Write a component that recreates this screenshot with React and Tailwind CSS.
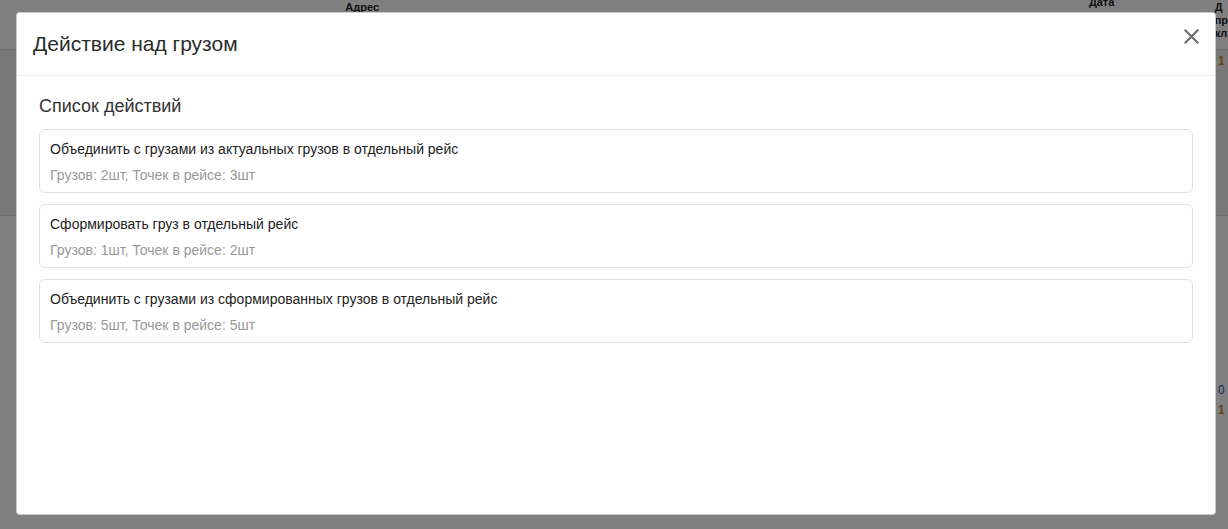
import React from "react";

const actions = [
  {
    title: "Объединить с грузами из актуальных грузов в отдельный рейс",
    info: "Грузов: 2шт, Точек в рейсе: 3шт",
  },
  {
    title: "Сформировать груз в отдельный рейс",
    info: "Грузов: 1шт, Точек в рейсе: 2шт",
  },
  {
    title: "Объединить с грузами из сформированных грузов в отдельный рейс",
    info: "Грузов: 5шт, Точек в рейсе: 5шт",
  },
];

const headers = [
  { w: "w-[170px]", t: "Груз" },
  { w: "w-[146px]", t: "Отправитель" },
  { w: "w-[120px]", t: "Адрес" },
  { w: "w-[120px]", t: "Получатель" },
  { w: "w-[100px]", t: "Вес" },
  { w: "w-[190px]", t: "Транспорт" },
  { w: "w-[85px]", t: "Водитель" },
  { w: "w-[125px]", t: "Статус" },
  { w: "w-[131px]", t: "Дата" },
];

const App = () => {
  return (
    <div className="relative w-full h-[529px] overflow-hidden bg-white font-['Liberation_Sans',Arial,sans-serif]">
      {/* table behind the backdrop */}
      <div className="text-[11px] text-[#222]">
        <div className="flex h-[50px] border-b border-[#ddd]">
          <div className="w-[30px]" />
          {headers.map((h) => (
            <div key={h.t} className={`${h.w} pt-[12px] font-bold`}>
              {h.t === "Адрес" ? (
                <div className="-mt-[12px] pt-[1px] leading-[13px]">
                  Адрес
                  <br />
                  доставки
                </div>
              ) : h.t === "Дата" ? (
                <div className="-mt-[16px] pl-[5px] leading-[13px]">
                  Дата
                  <br />
                  создания
                </div>
              ) : (
                <span>{h.t}</span>
              )}
            </div>
          ))}
          <div className="font-bold leading-[13px] pt-[1px]">
            Д
            <br />
            пр
            <br />
            кл
          </div>
        </div>
        <div className="flex h-[166px] border-b border-[#ddd] bg-[#f1f1f1]">
          <div className="flex-1" />
          <div className="w-[10px] pt-[2px] text-[12px] text-[#c98a1e] font-bold">1</div>
        </div>
        <div className="flex h-[200px]">
          <div className="flex-1" />
          <div className="w-[10px] pt-[164px] text-[12px] leading-[20px]">
            <div className="text-[#2156b3]">0</div>
            <div className="text-[#c98a1e] font-bold">1</div>
          </div>
        </div>
      </div>

      {/* backdrop */}
      <div className="absolute inset-0 bg-black/50" />

      {/* modal */}
      <div className="absolute left-[16px] top-[12px] w-[1200px] h-[503px] bg-white border border-black/20 rounded-[4px] flex flex-col">
        <div className="flex items-start justify-between h-[63px] px-[16px] pt-[16px] border-b border-[#e9ecef]">
          <h5 className="text-[21px] leading-[30px] font-medium text-[#2b2b2b]">
            Действие над грузом
          </h5>
          <button className="w-[15px] h-[15px] text-[#6e6e6e]">
            <svg viewBox="0 0 15 15" width="15" height="15">
              <path d="M1.5 1.5 L13.5 13.5 M13.5 1.5 L1.5 13.5" stroke="currentColor" strokeWidth="2.2" strokeLinecap="square" fill="none" />
            </svg>
          </button>
        </div>
        <div className="px-[22px] pt-[19px]">
          <div className="text-[18px] leading-[22px] text-[#333] mb-[12px]">Список действий</div>
          <div className="flex flex-col gap-[11px]">
            {actions.map((a) => (
              <div
                key={a.title}
                className="h-[64px] border border-[#dedede] rounded-[6px] px-[10px] pt-[10px]"
              >
                <div className="text-[14px] leading-[18px] text-[#222]">{a.title}</div>
                <div className="mt-[8px] text-[14px] leading-[18px] text-[#999]">{a.info}</div>
              </div>
            ))}
          </div>
        </div>
      </div>
    </div>
  );
};

export default App;
